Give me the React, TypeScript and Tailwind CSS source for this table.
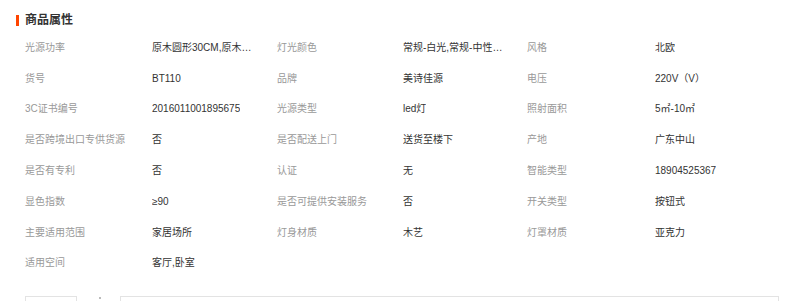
import React from "react";

type Attr = { label: string; value: string };

const attrs: Attr[] = [
  { label: "光源功率", value: "原木圆形30CM,原木圆形40CM" },
  { label: "灯光颜色", value: "常规-白光,常规-中性光,常规-暖光" },
  { label: "风格", value: "北欧" },
  { label: "货号", value: "BT110" },
  { label: "品牌", value: "美诗佳源" },
  { label: "电压", value: "220V（V）" },
  { label: "3C证书编号", value: "2016011001895675" },
  { label: "光源类型", value: "led灯" },
  { label: "照射面积", value: "5㎡-10㎡" },
  { label: "是否跨境出口专供货源", value: "否" },
  { label: "是否配送上门", value: "送货至楼下" },
  { label: "产地", value: "广东中山" },
  { label: "是否有专利", value: "否" },
  { label: "认证", value: "无" },
  { label: "智能类型", value: "18904525367" },
  { label: "显色指数", value: "≥90" },
  { label: "是否可提供安装服务", value: "否" },
  { label: "开关类型", value: "按钮式" },
  { label: "主要适用范围", value: "家居场所" },
  { label: "灯身材质", value: "木艺" },
  { label: "灯罩材质", value: "亚克力" },
  { label: "适用空间", value: "客厅,卧室" },
];

function App() {
  return (
    <div
      className="w-[788px] h-[301px] overflow-hidden bg-white"
      style={{ fontFamily: '"Liberation Sans", "Noto Sans CJK SC", sans-serif' }}
    >
      <div className="flex items-center h-[20px] mt-[10px] pl-[16px]">
        <span className="w-[3px] h-[11px] bg-[#ff4400]" />
        <h2 className="ml-[6px] text-[12px] font-bold text-[#333] leading-none">商品属性</h2>
      </div>

      <div className="grid grid-cols-[127px_125px_126px_124px_128px_126px] ml-[25px] mt-[2px]">
        {attrs.map((a, i) => (
          <React.Fragment key={i}>
            <div className="h-[30.8px] flex items-center text-[10px] text-[#999] whitespace-nowrap">
              {a.label}
            </div>
            <div className="h-[30.8px] flex items-center text-[10px] text-[#333] min-w-0">
              <span className="block max-w-[100px] truncate">{a.value}</span>
            </div>
          </React.Fragment>
        ))}
      </div>

      <div className="flex items-start ml-[25px] mt-[18px]">
        <div className="w-[52px] h-[24px] border border-[#e3e3e3]" />
        <span className="ml-[22px] mt-[1px] w-[2px] h-[2px] bg-[#bbb]" />
        <div className="ml-[19px] w-[659px] h-[24px] border border-[#e3e3e3]" />
      </div>
    </div>
  );
}

export default App;
